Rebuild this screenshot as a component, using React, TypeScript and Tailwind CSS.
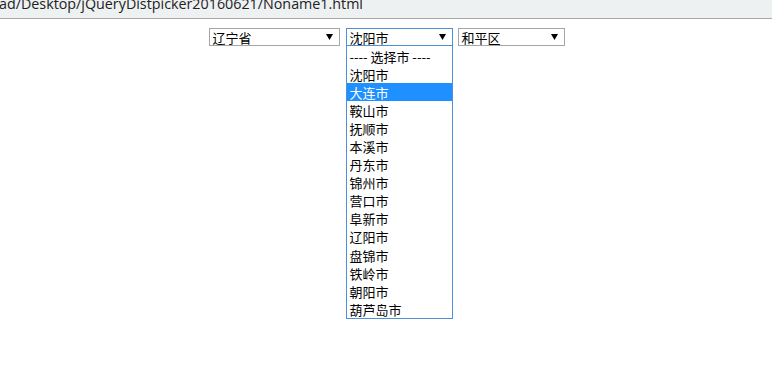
const cities = [
  '---- 选择市 ----',
  '沈阳市',
  '大连市',
  '鞍山市',
  '抚顺市',
  '本溪市',
  '丹东市',
  '锦州市',
  '营口市',
  '阜新市',
  '辽阳市',
  '盘锦市',
  '铁岭市',
  '朝阳市',
  '葫芦岛市',
];

const font = { fontFamily: '"Noto Sans CJK SC", "Noto Sans", sans-serif' };

function Arrow() {
  return (
    <svg width="7" height="6" viewBox="0 0 7 6" className="shrink-0">
      <path d="M0 0 H7 L3.5 6 Z" fill="#000" />
    </svg>
  );
}

function FakeSelect({
  label,
  width,
  active,
}: {
  label: string;
  width: string;
  active?: boolean;
}) {
  return (
    <div
      className={`${width} h-[18px] flex items-center justify-between pl-[3px] pr-[6px] bg-white border ${
        active ? 'border-[#4d90d6]' : 'border-[#a6a6a6]'
      } text-[13px] leading-none text-black`}
    >
      <span className="mt-[1px]">{label}</span>
      <Arrow />
    </div>
  );
}

export default function App() {
  return (
    <div className="w-[772px] h-[388px] bg-white overflow-hidden" style={font}>
      <div className="h-[19px] bg-[#eef1f2] overflow-hidden border-b border-[#a9a9a9]">
        <div
          className="text-[14.3px] leading-[20px] text-[#222] -mt-[6px] -ml-[1px] whitespace-nowrap"
          style={{ fontFamily: '"Open Sans", "Noto Sans", sans-serif' }}
        >
          ad/Desktop/jQueryDistpicker20160621/Noname1.html
        </div>
      </div>
      <div className="flex justify-center pt-[9px] pl-[1px]">
        <FakeSelect label="辽宁省" width="w-[131px]" />
        <div className="relative ml-[6px]">
          <FakeSelect label="沈阳市" width="w-[107px]" active />
          <ul className="absolute left-0 top-[17px] w-[107px] bg-white border border-[#4d90d6] pt-[1px]">
            {cities.map((c, i) => (
              <li
                key={c}
                className={`h-[18.1px] flex items-center pl-[3px] text-[13px] leading-none ${
                  i === 2 ? 'bg-[#1e90ff] text-white' : 'text-black'
                }`}
              >
                {c}
              </li>
            ))}
          </ul>
        </div>
        <div className="ml-[5px]">
          <FakeSelect label="和平区" width="w-[107px]" />
        </div>
      </div>
    </div>
  );
}
